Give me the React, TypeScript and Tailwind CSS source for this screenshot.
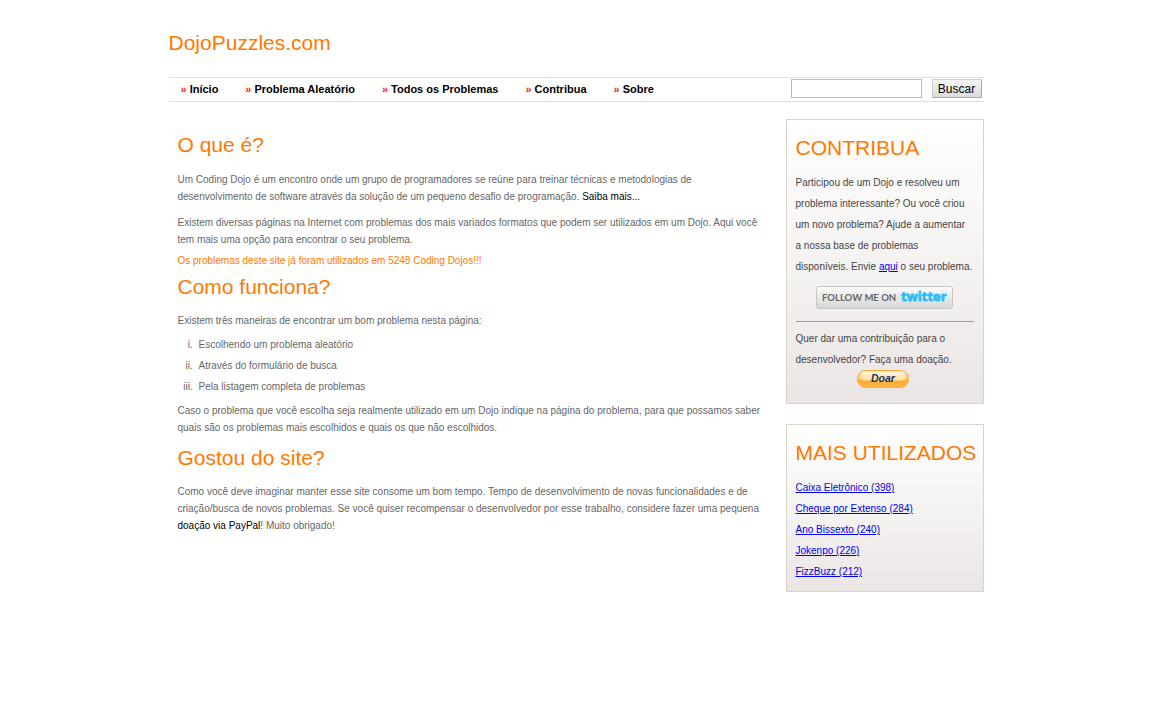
import type { ReactNode } from "react";

const menu = ["Início", "Problema Aleatório", "Todos os Problemas", "Contribua", "Sobre"];

const steps = [
  "Escolhendo um problema aleatório",
  "Através do formulário de busca",
  "Pela listagem completa de problemas",
];

const mostUsed = [
  { name: "Caixa Eletrônico", count: 398 },
  { name: "Cheque por Extenso", count: 284 },
  { name: "Ano Bissexto", count: 240 },
  { name: "Jokenpo", count: 226 },
  { name: "FizzBuzz", count: 212 },
];

function Heading({ children }: { children: ReactNode }) {
  return <h2 className="text-[21px] leading-6 whitespace-nowrap text-[#ff7800]">{children}</h2>;
}

function Panel({ title, children }: { title: string; children: ReactNode }) {
  return (
    <section className="border border-[#d9d4c5] bg-linear-to-b from-white to-[#ebe6e5] px-[9px] pt-4">
      <Heading>{title}</Heading>
      {children}
    </section>
  );
}

function TwitterBadge() {
  return (
    <svg className="block h-[23px] w-[137px]" viewBox="0 0 137 23" role="img" aria-label="Follow me on Twitter">
      <defs>
        <linearGradient id="badge" x1="0" y1="0" x2="0" y2="1">
          <stop offset="0" stopColor="#fbfbfb" />
          <stop offset="1" stopColor="#d6d6d6" />
        </linearGradient>
      </defs>
      <rect x="0.5" y="0.5" width="136" height="22" rx="2.5" fill="url(#badge)" stroke="#c6c6c6" />
      <text x="6" y="15" fontFamily="Lato, sans-serif" fontSize="9.5" fontWeight="700" fill="#666">
        FOLLOW ME ON
      </text>
      <text
        x="85"
        y="15"
        fontFamily="'Open Sans', sans-serif"
        fontSize="13"
        fontWeight="700"
        fill="#27bdf5"
        stroke="#27bdf5"
        strokeWidth="0.8"
        strokeLinejoin="round"
      >
        twitter
      </text>
    </svg>
  );
}

function DonateButton() {
  return (
    <button type="button" className="block cursor-pointer">
      <svg className="block h-[18px] w-[52px]" viewBox="0 0 52 18">
        <defs>
          <linearGradient id="pill" x1="0" y1="0" x2="0" y2="1">
            <stop offset="0" stopColor="#ffe3ae" />
            <stop offset="0.5" stopColor="#ffc869" />
            <stop offset="0.6" stopColor="#ffab2e" />
            <stop offset="1" stopColor="#ffb84a" />
          </linearGradient>
          <linearGradient id="gloss" x1="0" y1="0" x2="0" y2="1">
            <stop offset="0" stopColor="#fff4dc" />
            <stop offset="1" stopColor="#ffe0a4" />
          </linearGradient>
        </defs>
        <rect x="0.5" y="0.5" width="51" height="17" rx="8" fill="url(#pill)" stroke="#f7a93c" />
        <rect x="4" y="1.5" width="44" height="9" rx="4" fill="url(#gloss)" />
        <text x="26" y="12" textAnchor="middle" fontFamily="'Liberation Sans', sans-serif" fontSize="10.5" fontWeight="700" fontStyle="italic" fill="#14315f">
          Doar
        </text>
      </svg>
    </button>
  );
}

export default function App() {
  return (
    <div className="mx-auto max-w-[815px] pt-[31px] font-['Liberation_Sans',Arial,sans-serif] text-[10px] leading-[17px] text-[#666]">
      <header>
        <h1 className="text-[21px] leading-6 text-[#ff7800]">DojoPuzzles.com</h1>
        <div className="mt-[22px] flex h-[25px] items-start justify-between border-y border-[#e2e0d2] pt-px pr-0.5">
          <nav className="flex gap-[27px] pt-0.5 pl-3 text-[11px] font-bold text-black">
            {menu.map((item) => (
              <a key={item} href="#" className="flex gap-[3px]">
                <span className="text-[#ee1c25]">»</span>
                {item}
              </a>
            ))}
          </nav>
          <form className="flex gap-[10px]" onSubmit={(e) => e.preventDefault()}>
            <input
              type="text"
              aria-label="Buscar problemas"
              className="h-[19px] w-[131px] border border-[#bbb] bg-white px-1 text-[11px] text-black"
            />
            <button
              type="submit"
              className="h-[19px] w-[50px] border border-t-[#ccc] border-r-[#aaa] border-b-[#aaa] border-l-[#ccc] bg-linear-to-b from-[#f4f4f4] to-[#dcdcdc] text-xs leading-4 text-black"
            >
              Buscar
            </button>
          </form>
        </div>
      </header>

      <div className="mt-[17px] flex items-start gap-[18px]">
        <main className="flex-1 pt-[14px] pl-[9px]">
          <Heading>O que é?</Heading>
          <p className="mt-[14px]">
            Um Coding Dojo é um encontro onde um grupo de programadores se reúne para treinar técnicas e metodologias de
            desenvolvimento de software através da solução de um pequeno desafio de programação.{" "}
            <a href="#" className="text-black">Saiba mais...</a>
          </p>
          <p className="mt-[9px]">
            Existem diversas páginas na Internet com problemas dos mais variados formatos que podem ser utilizados em um
            Dojo. Aqui você tem mais uma opção para encontrar o seu problema.
          </p>
          <p className="mt-1 mb-[6px] text-[#ff7800]">Os problemas deste site já foram utilizados em 5248 Coding Dojos!!!</p>
          <Heading>Como funciona?</Heading>
          <p className="mt-[13px] mb-[5px]">Existem três maneiras de encontrar um bom problema nesta página:</p>
          <ol className="list-[lower-roman] pl-[18px] leading-[21px]">
            {steps.map((step) => (
              <li key={step} className="pl-[3px]">{step}</li>
            ))}
          </ol>
          <p className="mt-[5px] mb-[10px]">
            Caso o problema que você escolha seja realmente utilizado em um Dojo indique na página do problema, para que
            possamos saber quais são os problemas mais escolhidos e quais os que não escolhidos.
          </p>
          <Heading>Gostou do site?</Heading>
          <p className="mt-[13px]">
            Como você deve imaginar manter esse site consome um bom tempo. Tempo de desenvolvimento de novas
            funcionalidades e de criação/busca de novos problemas. Se você quiser recompensar o desenvolvedor por esse
            trabalho, considere fazer uma pequena <a href="#" className="text-black">doação via PayPal</a>! Muito
            obrigado!
          </p>
        </main>

        <aside className="flex w-[198px] flex-col gap-5 leading-[21px] text-[#444]">
          <Panel title="CONTRIBUA">
            <p className="mt-3">
              Participou de um Dojo e resolveu um problema interessante? Ou você criou um novo problema? Ajude a
              aumentar
              <br />a nossa base de problemas
              <br />
              disponíveis. Envie{" "}
              <a href="#" className="text-[#0000ee] underline">aqui</a> o seu problema.
            </p>
            <a href="#" className="mx-auto mt-[9px] block w-[137px]">
              <TwitterBadge />
            </a>
            <hr className="mt-3 mb-[6px] border-[#999]" />
            <p>Quer dar uma contribuição para o desenvolvedor? Faça uma doação.</p>
            <div className="flex justify-center pr-1 pb-[15px]">
              <DonateButton />
            </div>
          </Panel>
          <Panel title="MAIS UTILIZADOS">
            <ul className="mt-3 pb-[9px]">
              {mostUsed.map(({ name, count }) => (
                <li key={name}>
                  <a href="#" className="text-[#0000ee] underline">{`${name} (${count})`}</a>
                </li>
              ))}
            </ul>
          </Panel>
        </aside>
      </div>
    </div>
  );
}
